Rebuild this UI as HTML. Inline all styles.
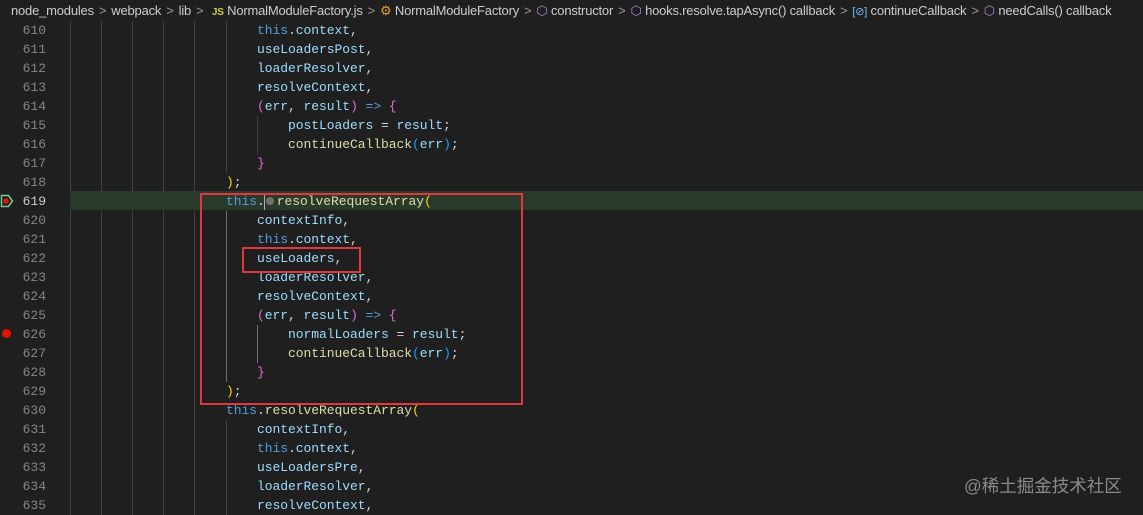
<!DOCTYPE html>
<html><head><meta charset="utf-8"><style>
*{margin:0;padding:0;box-sizing:border-box}
body{width:1143px;height:513px;background:#1f1f1f;overflow:hidden;position:relative;font-family:"Liberation Mono",monospace;}
.bc{position:absolute;left:0;top:0;width:1143px;height:22px;font-family:"Liberation Sans",sans-serif;font-size:13px;color:#cccccc;line-height:22px;padding-left:11px;white-space:nowrap;letter-spacing:-0.2px}
.bc .s{color:#9a9a9a;margin:0 5px}
.ln{position:absolute;left:0;width:46px;text-align:right;font-size:13px;color:#858585;line-height:19px;height:19px}
.ln.cur{color:#cccccc}
.code{position:absolute;font-size:13px;line-height:19px;height:19px;white-space:pre;color:#d4d4d4;letter-spacing:-0.05px}
.g{position:absolute;width:1px;background:#404040}
.k{color:#569cd6}.v{color:#9cdcfe}.f{color:#dcdcaa}.y{color:#ffd700}.p{color:#da70d6}.b{color:#179fff}.w{color:#d4d4d4}
</style></head><body>
<div style="position:absolute;left:70px;top:191px;width:1073px;height:19px;background:#2a3a2a"></div>
<div class="bc">node_modules<span class="s">&gt;</span>webpack<span class="s">&gt;</span>lib<span class="s">&gt;</span> <span style="color:#cbcb41;font-size:10px;font-weight:bold">JS</span> NormalModuleFactory.js<span class="s">&gt;</span><span style="color:#ee9d28">⚙</span> NormalModuleFactory<span class="s">&gt;</span><span style="color:#b180d7">⬡</span> constructor<span class="s">&gt;</span><span style="color:#b180d7">⬡</span> hooks.resolve.tapAsync() callback<span class="s">&gt;</span><span style="color:#75beff;font-size:11px">[⊘]</span> continueCallback<span class="s">&gt;</span><span style="color:#b180d7">⬡</span> needCalls() callback</div>
<div id="c"></div>
<div style="position:absolute;left:200px;top:193px;width:323px;height:212px;border:2px solid #e0383e"></div>
<div style="position:absolute;left:242px;top:247px;width:119px;height:26px;border:2px solid #e0383e"></div>
<svg style="position:absolute;left:0;top:194px" width="14" height="14"><path d="M1.5 1.5h7l4 5.5-4 5.5h-7z" fill="none" stroke="#73c991" stroke-width="1.5"/><circle cx="6" cy="7" r="2.8" fill="#e51400"/></svg>
<div style="position:absolute;left:2px;top:329px;width:9px;height:9px;border-radius:50%;background:#e51400"></div>
<div style="position:absolute;left:964px;top:473px;font-family:'Liberation Sans','Noto Sans CJK SC',sans-serif;font-size:17.5px;color:#8a8a8a">@稀土掘金技术社区</div>
<script>
const L={
610:[3,'<span class="k">this</span>.<span class="v">context</span>,'],
611:[3,'<span class="v">useLoadersPost</span>,'],
612:[3,'<span class="v">loaderResolver</span>,'],
613:[3,'<span class="v">resolveContext</span>,'],
614:[3,'<span class="p">(</span><span class="v">err</span>, <span class="v">result</span><span class="p">)</span> <span class="k">=&gt;</span> <span class="p">{</span>'],
615:[4,'<span class="v">postLoaders</span> = <span class="v">result</span>;'],
616:[4,'<span class="f">continueCallback</span><span class="b">(</span><span class="v">err</span><span class="b">)</span>;'],
617:[3,'<span class="p">}</span>'],
618:[2,'<span class="y">)</span>;'],
619:[2,'<span class="k">this</span>.<span style="display:inline-block;width:12px"></span><span class="f">resolveRequestArray</span><span class="y">(</span>'],
620:[3,'<span class="v">contextInfo</span>,'],
621:[3,'<span class="k">this</span>.<span class="v">context</span>,'],
622:[3,'<span class="v">useLoaders</span>,'],
623:[3,'<span class="v">loaderResolver</span>,'],
624:[3,'<span class="v">resolveContext</span>,'],
625:[3,'<span class="p">(</span><span class="v">err</span>, <span class="v">result</span><span class="p">)</span> <span class="k">=&gt;</span> <span class="p">{</span>'],
626:[4,'<span class="v">normalLoaders</span> = <span class="v">result</span>;'],
627:[4,'<span class="f">continueCallback</span><span class="b">(</span><span class="v">err</span><span class="b">)</span>;'],
628:[3,'<span class="p">}</span>'],
629:[2,'<span class="y">)</span>;'],
630:[2,'<span class="k">this</span>.<span class="f">resolveRequestArray</span><span class="y">(</span>'],
631:[3,'<span class="v">contextInfo</span>,'],
632:[3,'<span class="k">this</span>.<span class="v">context</span>,'],
633:[3,'<span class="v">useLoadersPre</span>,'],
634:[3,'<span class="v">loaderResolver</span>,'],
635:[3,'<span class="v">resolveContext</span>,']};
let h='';const X=[226,257,288],G=[70,101,132,163,194];
for(const n in L){const k=n-610,t=21+k*19;const [lv,s]=L[n];
h+=`<div class="ln${n==619?' cur':''}" style="top:${t}px">${n}</div>`;
for(const gx of G){ if(!(n==619&&gx>=70)) h+=`<div class="g" style="left:${gx}px;top:${t}px;height:19px"></div>`;}
if(lv>=3)h+=`<div class="g" style="left:226px;top:${t}px;height:19px;background:${(n>=620&&n<=628)?'#707070':'#404040'}"></div>`;
if(lv>=4)h+=`<div class="g" style="left:257px;top:${t}px;height:19px;background:${(n==626||n==627)?'#707070':'#404040'}"></div>`;
h+=`<div class="code" style="left:${X[lv-2]}px;top:${t}px">${s}</div>`;}
h+='<div style="position:absolute;left:264px;top:195px;width:1px;height:15px;background:#aeafad"></div><div style="position:absolute;left:266px;top:197px;width:8px;height:8px;border-radius:50%;background:#707070"></div>';
document.getElementById('c').innerHTML=h;
</script>
</body></html>
